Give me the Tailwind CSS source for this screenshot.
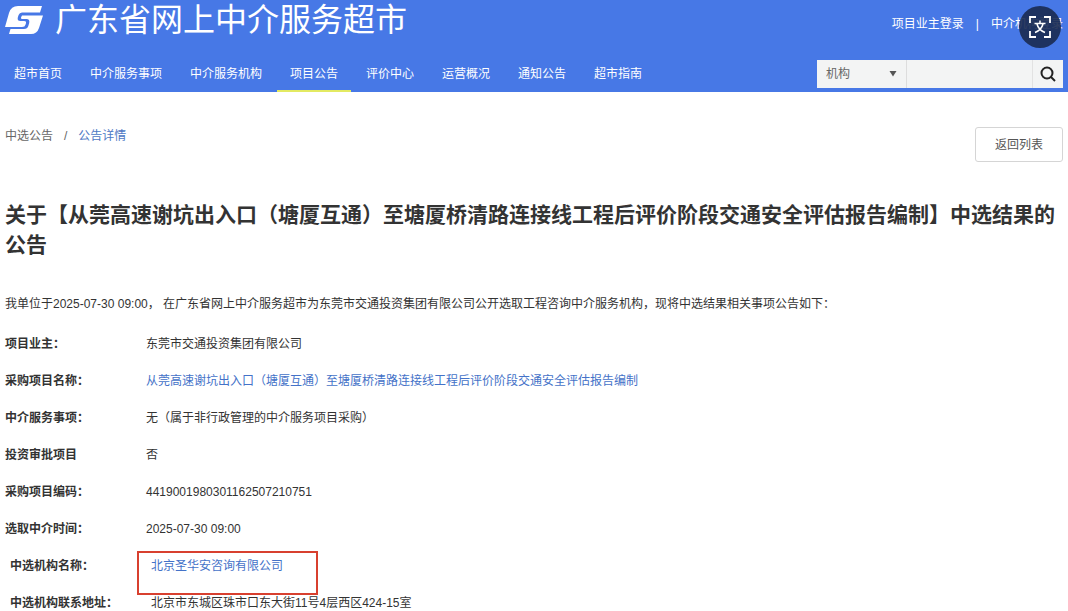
<!DOCTYPE html>
<html lang="zh-CN">
<head>
    <meta charset="UTF-8">
    <meta name="viewport" content="width=device-width, initial-scale=1.0">
    <title>广东省网上中介服务超市</title>

    <!-- Tailwind CSS -->
    <script src="https://cdn.jsdelivr.net/npm/@tailwindcss/browser@4"></script>
</head>
<body class="bg-white text-[#333] text-xs font-['Liberation_Sans','Noto_Sans_CJK_SC',sans-serif]">

    <!-- Header -->
    <header class="bg-[#4778e6] text-white">
        <div class="flex items-start justify-between h-[57px] px-[5px]">
            <a href="#" class="flex items-center gap-3 h-10">
                <svg class="w-[38px] h-7" viewBox="0 0 38 28" fill="none" aria-hidden="true">
                    <path fill="#fff" d="M13 0H37L35 6.500H17Q14.500 6.500 13.600 9L12.800 11.500Q12 15 15.500 15H19Q21.500 15 21 17L20.600 18.500Q20 21 17 21H0L4 7Q6 0 13 0Z"/>
                    <path fill="#fff" d="M17 9.500H38L34 22Q32 28 26 28H4L5.500 23H19Q22.500 23 23.300 20L24.200 17Q25 13 21.500 13H17.500Q15.500 13 16 11.500Z"/>
                </svg>
                <h1 class="text-[32px] leading-10">广东省网上中介服务超市</h1>
            </a>
            <div class="flex gap-3 pt-4 leading-4">
                <a href="#">项目业主登录</a>
                <span>|</span>
                <a href="#">中介机构登录</a>
            </div>
        </div>

        <div class="flex items-stretch justify-between h-[35px] pr-[5px]">
            <nav class="flex">
                <a href="#" class="mx-px px-[13px] leading-[35px]">超市首页</a>
                <a href="#" class="mx-px px-[13px] leading-[35px]">中介服务事项</a>
                <a href="#" class="mx-px px-[13px] leading-[35px]">中介服务机构</a>
                <a href="#" class="mx-px px-[13px] leading-[35px] shadow-[inset_0_-2px_0_#e3ea62]">项目公告</a>
                <a href="#" class="mx-px px-[13px] leading-[35px]">评价中心</a>
                <a href="#" class="mx-px px-[13px] leading-[35px]">运营概况</a>
                <a href="#" class="mx-px px-[13px] leading-[35px]">通知公告</a>
                <a href="#" class="mx-px px-[13px] leading-[35px]">超市指南</a>
            </nav>

            <form class="flex h-7 mt-[3px] bg-[#f3f4f4] text-[#666]">
                <div class="grid items-center w-[90px] border-r border-[#ddd]">
                    <select aria-label="搜索类型" class="col-start-1 row-start-1 appearance-none w-full h-7 pl-[9px] outline-none">
                        <option>机构</option>
                        <option>公告</option>
                    </select>
                    <svg class="col-start-1 row-start-1 justify-self-end mr-[9px] w-2 h-[6px] pointer-events-none" viewBox="0 0 8 6" aria-hidden="true">
                        <path fill="#555" d="M0.500 0H7.500L4 5.500Z"/>
                    </svg>
                </div>
                <input type="text" aria-label="关键字" class="w-[125px] px-2 outline-none">
                <button type="submit" aria-label="搜索" class="flex items-center justify-center w-[31px] border-l border-[#e2e2e2]">
                    <svg class="w-4 h-4" viewBox="0 0 16 16" fill="none" stroke="#222" stroke-width="2" aria-hidden="true">
                        <circle cx="7" cy="7" r="5.500"/>
                        <path d="M11 11L15 15"/>
                    </svg>
                </button>
            </form>
        </div>
    </header>

    <!-- Floating translate button -->
    <button type="button" aria-label="翻译" class="absolute top-[6px] right-[7px] flex items-center justify-center w-[42px] h-[42px] rounded-full bg-[#1a2a50]/90">
        <svg class="w-[22px] h-[22px]" viewBox="0 0 22 22" fill="none" stroke="#fff" stroke-width="1.800" aria-hidden="true">
            <path d="M1 7V1H7M15 1H21V7M21 15V21H15M7 21H1V15"/>
            <path stroke-width="1.500" d="M11 4.500V7.500M5.500 7.500H16.500M14 8Q12.500 14 6 16.500M8 8Q9.500 14 16 16.500"/>
        </svg>
    </button>

    <main class="px-[5px]">
        <div class="flex items-start justify-between pt-[35px]">
            <div class="flex gap-[11px] leading-[18px] text-[#666]">
                <a href="#">中选公告</a>
                <span>/</span>
                <a href="#" class="text-[#4d78c4]">公告详情</a>
            </div>
            <button type="button" class="w-[88px] h-[35px] border border-[#d5d5d5] rounded-[3px] text-[#555]">返回列表</button>
        </div>

        <h2 class="mt-[38px] text-[21px] leading-[30px] font-bold">关于【从莞高速谢坑出入口（塘厦互通）至塘厦桥清路连接线工程后评价阶段交通安全评估报告编制】中选结果的公告</h2>

        <p class="mt-9 leading-4">我单位于2025-07-30 09:00， 在广东省网上中介服务超市为东莞市交通投资集团有限公司公开选取工程咨询中介服务机构，现将中选结果相关事项公告如下：</p>

        <!-- Result details -->
        <dl class="flex flex-col gap-[21px] mt-6 leading-4">
            <div class="flex">
                <dt class="w-[141px] font-bold">项目业主：</dt>
                <dd>东莞市交通投资集团有限公司</dd>
            </div>
            <div class="flex">
                <dt class="w-[141px] font-bold">采购项目名称：</dt>
                <dd><a href="#" class="text-[#4472c8]">从莞高速谢坑出入口（塘厦互通）至塘厦桥清路连接线工程后评价阶段交通安全评估报告编制</a></dd>
            </div>
            <div class="flex">
                <dt class="w-[141px] font-bold">中介服务事项：</dt>
                <dd>无（属于非行政管理的中介服务项目采购）</dd>
            </div>
            <div class="flex">
                <dt class="w-[141px] font-bold">投资审批项目</dt>
                <dd>否</dd>
            </div>
            <div class="flex">
                <dt class="w-[141px] font-bold">采购项目编码：</dt>
                <dd>4419001980301162507210751</dd>
            </div>
            <div class="flex">
                <dt class="w-[141px] font-bold">选取中介时间：</dt>
                <dd>2025-07-30 09:00</dd>
            </div>
            <div class="flex pl-[5px]">
                <dt class="w-[141px] font-bold">中选机构名称：</dt>
                <dd class="relative">
                    <a href="#" class="text-[#4472c8]">北京圣华安咨询有限公司</a>
                    <span class="absolute -top-[7px] -left-[14px] w-[181px] h-11 border-2 border-[#d8402f] pointer-events-none"></span>
                </dd>
            </div>
            <div class="flex pl-[5px]">
                <dt class="w-[141px] font-bold">中选机构联系地址：</dt>
                <dd>北京市东城区珠市口东大街11号4层西区424-15室</dd>
            </div>
        </dl>
    </main>
</body>
</html>
